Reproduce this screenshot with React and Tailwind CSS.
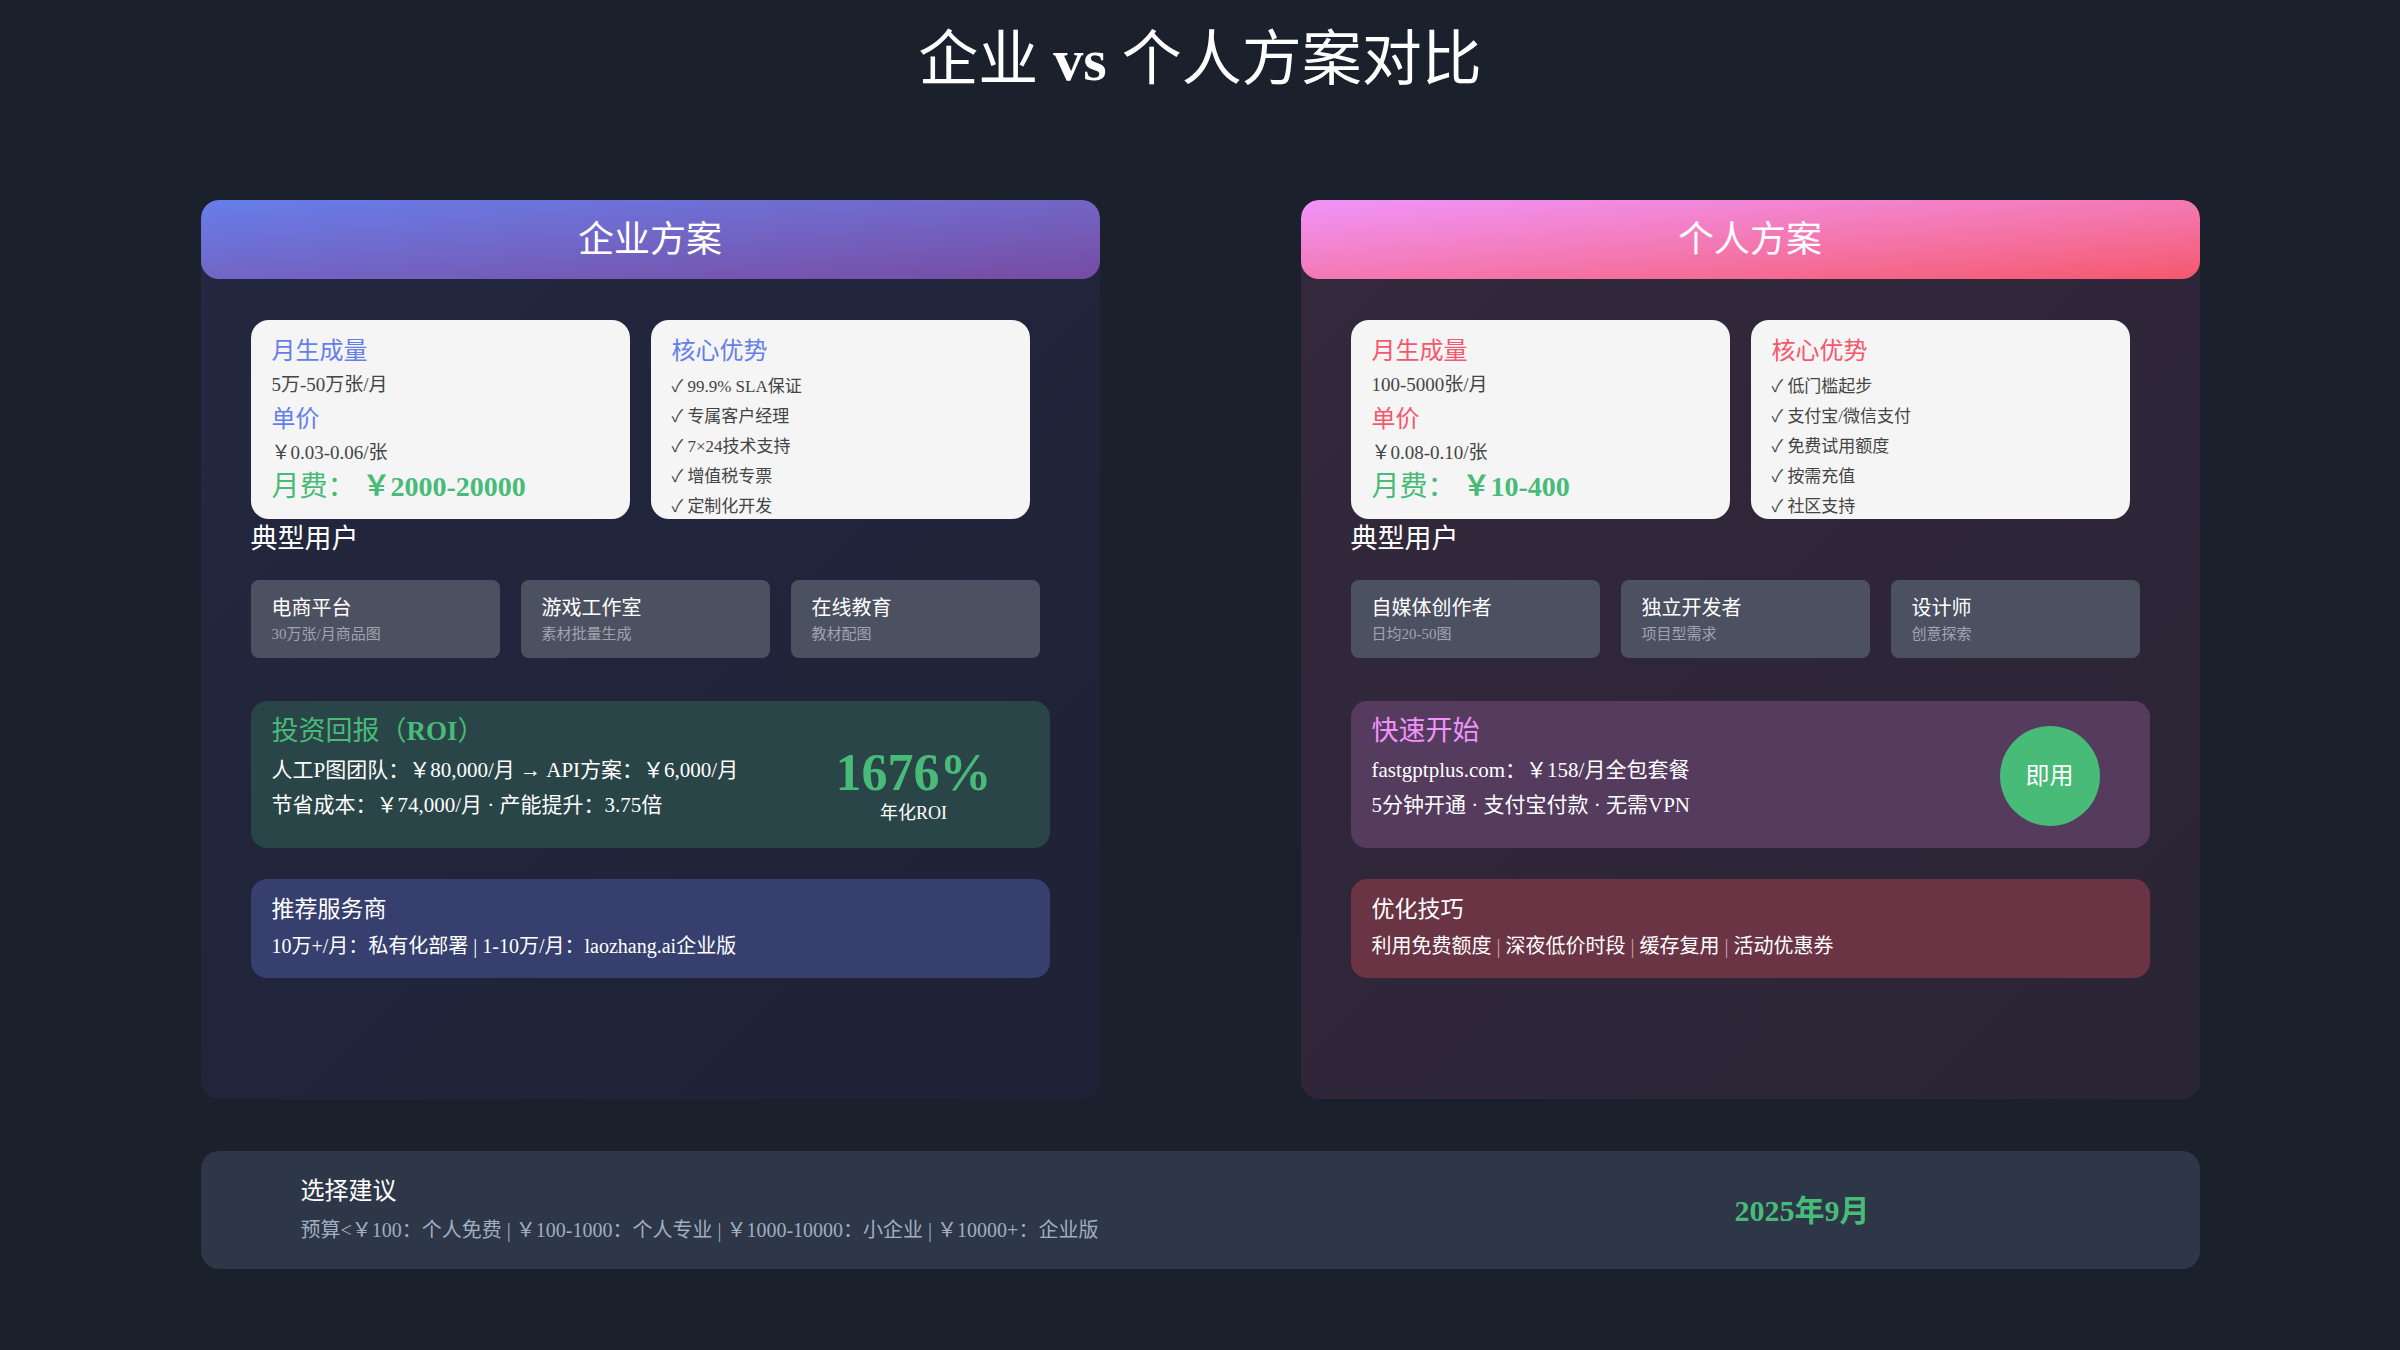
const F = { fontFamily: '"Liberation Serif","Noto Sans CJK SC",serif' };

function Panel({ title, grad, bg, accent, volume, price, fee, perks, users, children }) {
  return (
    <div className={`w-[899px] h-[899px] rounded-[18px] overflow-hidden ${bg}`}>
      <div className={`h-[79px] flex items-center justify-center text-white text-[36px] rounded-[18px] ${grad}`}>{title}</div>
      <div className="pl-[50px] pt-[41px]">
        <div className="flex gap-[21px]">
          <div className="w-[379px] h-[199px] bg-[#f5f5f5] rounded-[18px] px-[21px] pt-[14px] overflow-hidden">
            <div className={`text-[24px] leading-[34px] ${accent}`}>月生成量</div>
            <div className="text-[19px] leading-[34px] text-[#444]">{volume}</div>
            <div className={`text-[24px] leading-[34px] ${accent}`}>单价</div>
            <div className="text-[19px] leading-[34px] text-[#444]">{price}</div>
            <div className="text-[28px] leading-[34px] text-[#48bb78] font-bold"><span className="font-normal">月费：</span> {fee}</div>
          </div>
          <div className="w-[379px] h-[199px] bg-[#f5f5f5] rounded-[18px] px-[21px] pt-[14px] overflow-hidden">
            <div className={`text-[24px] leading-[34px] ${accent}`}>核心优势</div>
            <div className="mt-[4px]">
              {perks.map((p) => (
                <div key={p} className="text-[17px] leading-[30px] text-[#444]">✓ {p}</div>
              ))}
            </div>
          </div>
        </div>
        <div className="text-white text-[27px] leading-[40px]">典型用户</div>
        <div className="flex gap-[21px] mt-[21px]">
          {users.map(([a, b]) => (
            <div key={a} className="w-[249px] h-[78px] rounded-[8px] bg-[#4c5162] px-[21px] pt-[14px]">
              <div className="text-white text-[20px] leading-[28px]">{a}</div>
              <div className="text-[#a0a4b0] text-[15px] leading-[24px]">{b}</div>
            </div>
          ))}
        </div>
        {children}
      </div>
    </div>
  );
}

export default function App() {
  return (
    <div className="w-[2400px] h-[1350px] bg-[#1a202c] flex flex-col items-center" style={F}>
      <div className="text-white text-[60px] leading-[60px] mt-[30px]">企业 <b>vs</b> 个人方案对比</div>
      <div className="flex gap-[201px] mt-[110px]">
        <Panel
          title="企业方案"
          grad="bg-gradient-to-br from-[#667eea] to-[#764ba2]"
          bg="bg-gradient-to-br from-[#222840] to-[#1f2236]"
          accent="text-[#667eea]"
          volume="5万-50万张/月"
          price="￥0.03-0.06/张"
          fee="￥2000-20000"
          perks={["99.9% SLA保证", "专属客户经理", "7×24技术支持", "增值税专票", "定制化开发"]}
          users={[["电商平台", "30万张/月商品图"], ["游戏工作室", "素材批量生成"], ["在线教育", "教材配图"]]}
        >
          <div className="w-[799px] h-[147px] mt-[43px] rounded-[16px] bg-[#2a4548] px-[21px] pt-[10px] flex">
            <div className="flex-1">
              <div className="text-[#48bb78] text-[27px] leading-[40px]">投资回报（<b>ROI</b>）</div>
              <div className="text-white text-[21px] leading-[35px] mt-[2px]">人工P图团队：￥80,000/月 → API方案：￥6,000/月</div>
              <div className="text-white text-[21px] leading-[35px]">节省成本：￥74,000/月 · 产能提升：3.75倍</div>
            </div>
            <div className="w-[200px] flex flex-col items-center pt-[36px] pr-[30px]">
              <div className="text-[#48bb78] text-[52px] leading-[52px] font-bold">1676%</div>
              <div className="text-white text-[18px] leading-[28px]">年化ROI</div>
            </div>
          </div>
          <div className="w-[799px] h-[99px] mt-[31px] rounded-[16px] bg-[#363f6d] px-[21px] pt-[14px]">
            <div className="text-white text-[23px] leading-[34px]">推荐服务商</div>
            <div className="text-white text-[20px] leading-[34px] mt-[2px]">10万+/月：私有化部署 | 1-10万/月：laozhang.ai企业版</div>
          </div>
        </Panel>
        <Panel
          title="个人方案"
          grad="bg-gradient-to-br from-[#f093fb] to-[#f5576c]"
          bg="bg-gradient-to-br from-[#33283c] to-[#2a2535]"
          accent="text-[#f5576c]"
          volume="100-5000张/月"
          price="￥0.08-0.10/张"
          fee="￥10-400"
          perks={["低门槛起步", "支付宝/微信支付", "免费试用额度", "按需充值", "社区支持"]}
          users={[["自媒体创作者", "日均20-50图"], ["独立开发者", "项目型需求"], ["设计师", "创意探索"]]}
        >
          <div className="w-[799px] h-[147px] mt-[43px] rounded-[16px] bg-[#553b5e] px-[21px] pt-[10px] flex">
            <div className="flex-1">
              <div className="text-[#f093fb] text-[27px] leading-[40px]">快速开始</div>
              <div className="text-white text-[21px] leading-[35px] mt-[2px]">fastgptplus.com：￥158/月全包套餐</div>
              <div className="text-white text-[21px] leading-[35px]">5分钟开通 · 支付宝付款 · 无需VPN</div>
            </div>
            <div className="w-[100px] h-[100px] rounded-full bg-[#48bb78] text-white text-[24px] flex items-center justify-center mt-[15px] mr-[29px]">即用</div>
          </div>
          <div className="w-[799px] h-[99px] mt-[31px] rounded-[16px] bg-[#6a3445] px-[21px] pt-[14px]">
            <div className="text-white text-[23px] leading-[34px]">优化技巧</div>
            <div className="text-white text-[20px] leading-[34px] mt-[2px]">利用免费额度 <span className="text-[#c9a0ab]">|</span> 深夜低价时段 <span className="text-[#c9a0ab]">|</span> 缓存复用 <span className="text-[#c9a0ab]">|</span> 活动优惠券</div>
          </div>
        </Panel>
      </div>
      <div className="w-[1999px] h-[118px] mt-[52px] rounded-[18px] bg-[#2d3748] flex items-center pl-[100px] pr-[330px]">
        <div className="flex-1">
          <div className="text-white text-[24px] leading-[36px]">选择建议</div>
          <div className="text-[#a0aec0] text-[20px] leading-[34px] mt-[4px]">预算&lt;￥100：个人免费 | ￥100-1000：个人专业 | ￥1000-10000：小企业 | ￥10000+：企业版</div>
        </div>
        <div className="text-[#48bb78] text-[30px] font-bold">2025年9月</div>
      </div>
    </div>
  );
}
